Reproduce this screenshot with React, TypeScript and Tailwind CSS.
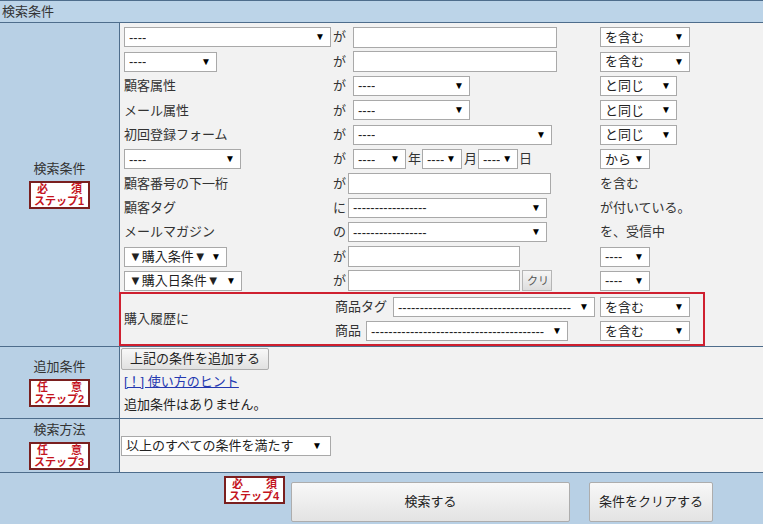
import React from "react";

const FONT = "font-['Liberation_Sans','Noto_Sans_CJK_JP',sans-serif]";

function Sel({ w, text, className = "" }: { w: number; text: string; className?: string }) {
  return (
    <div
      className={`flex h-[20px] shrink-0 items-center justify-between border border-[#a9a9a9] bg-white pl-[4px] pr-[5px] text-[13px] leading-none text-[#222] ${className}`}
      style={{ width: w }}
    >
      <span className="whitespace-nowrap overflow-hidden">{text}</span>
      <span className="text-[10px] text-black">▼</span>
    </div>
  );
}

function Inp({ w, className = "" }: { w: number; className?: string }) {
  return (
    <div
      className={`h-[21px] shrink-0 border border-[#a9a9a9] bg-white ${className}`}
      style={{ width: w }}
    />
  );
}

function Badge({ top, bottom }: { top: [string, string]; bottom: string }) {
  return (
    <div className="flex h-[28px] w-[61px] flex-col justify-center border-2 border-[#7a1f1f] bg-white text-[11px] font-bold leading-[12px] text-[#c4141e]">
      <div className="flex justify-between px-[6px]">
        <span>{top[0]}</span>
        <span>{top[1]}</span>
      </div>
      <div className="whitespace-nowrap pl-[3px]">{bottom}</div>
    </div>
  );
}

function Row({ children }: { children: React.ReactNode }) {
  return <div className="flex h-[24.4px] items-center">{children}</div>;
}

function Col1({ children }: { children: React.ReactNode }) {
  return <div className="flex w-[209px] shrink-0 items-center">{children}</div>;
}

function Col2({ children }: { children: React.ReactNode }) {
  return <div className="flex w-[267px] shrink-0 items-center">{children}</div>;
}

function LeftCell({ label, badge }: { label: string; badge: React.ReactNode }) {
  return (
    <div className="flex w-[120px] shrink-0 flex-col items-center justify-center gap-[4px] border-r border-[#4e6d8c] bg-[#b8d0e5]">
      <div className="leading-[16px] text-[#333]">{label}</div>
      {badge}
    </div>
  );
}

export default function App() {
  const ga = <span className="w-[13px] shrink-0">が</span>;
  const longDash = "----------------------------------------";
  return (
    <div className={`${FONT} h-[524px] w-[763px] overflow-hidden bg-[#f2f2f2] text-[13px] text-[#333]`}>
      {/* header */}
      <div className="flex h-[23px] items-center border-t border-b border-[#4e6d8c] bg-[#bcd4e8] pl-[2px] leading-none">
        検索条件
      </div>

      {/* section 1 */}
      <div className="flex h-[324px] border-b border-[#4e6d8c]">
        <LeftCell label="検索条件" badge={<Badge top={["必", "須"]} bottom="ステップ1" />} />
        <div className="flex flex-col pl-[4px] pt-[2px]">
          <Row>
            <Col1><Sel w={207} text="----" /></Col1>
            <Col2>{ga}<Inp w={204} className="ml-[7px]" /></Col2>
            <Sel w={90} text="を含む" />
          </Row>
          <Row>
            <Col1><Sel w={93} text="----" /></Col1>
            <Col2>{ga}<Inp w={204} className="ml-[7px]" /></Col2>
            <Sel w={90} text="を含む" />
          </Row>
          <Row>
            <Col1>顧客属性</Col1>
            <Col2>{ga}<Sel w={117} text="----" className="ml-[7px]" /></Col2>
            <Sel w={77} text="と同じ" />
          </Row>
          <Row>
            <Col1>メール属性</Col1>
            <Col2>{ga}<Sel w={117} text="----" className="ml-[7px]" /></Col2>
            <Sel w={77} text="と同じ" />
          </Row>
          <Row>
            <Col1>初回登録フォーム</Col1>
            <Col2>{ga}<Sel w={199} text="----" className="ml-[7px]" /></Col2>
            <Sel w={77} text="と同じ" />
          </Row>
          <Row>
            <Col1><Sel w={117} text="----" /></Col1>
            <Col2>
              {ga}
              <Sel w={53} text="----" className="ml-[7px]" />
              <span className="ml-[2px]">年</span>
              <Sel w={40} text="----" className="ml-[1px] pr-[3px]" />
              <span className="ml-[2px]">月</span>
              <Sel w={40} text="----" className="ml-[1px] pr-[3px]" />
              <span className="ml-[1px]">日</span>
            </Col2>
            <Sel w={50} text="から" />
          </Row>
          <Row>
            <Col1>顧客番号の下一桁</Col1>
            <Col2>{ga}<Inp w={203} className="ml-[2px]" /></Col2>
            <span>を含む</span>
          </Row>
          <Row>
            <Col1>顧客タグ</Col1>
            <Col2><span className="w-[13px] shrink-0">に</span><Sel w={199} text="-----------------" className="ml-[2px]" /></Col2>
            <span>が付いている。</span>
          </Row>
          <Row>
            <Col1>メールマガジン</Col1>
            <Col2><span className="w-[13px] shrink-0">の</span><Sel w={199} text="-----------------" className="ml-[2px]" /></Col2>
            <span>を、受信中</span>
          </Row>
          <Row>
            <Col1><Sel w={103} text="▼購入条件▼" /></Col1>
            <Col2>{ga}<Inp w={172} className="ml-[2px]" /></Col2>
            <Sel w={50} text="----" />
          </Row>
          <Row>
            <Col1><Sel w={118} text="▼購入日条件▼" /></Col1>
            <Col2>
              {ga}
              <Inp w={172} className="ml-[2px]" />
              <div className="ml-[2px] flex h-[21px] w-[30px] items-center justify-end overflow-hidden border border-[#b5b5b5] bg-gradient-to-b from-[#f6f6f6] to-[#dedede] pr-[2px] text-[11px] text-[#555]">
                クリ
              </div>
            </Col2>
            <Sel w={50} text="----" />
          </Row>
          <div className="-ml-[5px] -mt-[1px] flex h-[54px] w-[586px] items-center border-2 border-[#cf2030]">
            <div className="w-[214px] shrink-0 pl-[3px]">購入履歴に</div>
            <div className="flex flex-col gap-[4px]">
              <div className="flex items-center">
                <span className="w-[58px] shrink-0">商品タグ</span>
                <Sel w={202} text={longDash} className="gap-[6px]" />
                <Sel w={90} text="を含む" className="ml-[5px]" />
              </div>
              <div className="flex items-center">
                <span className="w-[31px] shrink-0">商品</span>
                <Sel w={202} text={longDash} className="gap-[6px]" />
                <Sel w={90} text="を含む" className="ml-[32px]" />
              </div>
            </div>
          </div>
        </div>
      </div>

      {/* section 2 */}
      <div className="flex h-[72px] border-b border-[#4e6d8c]">
        <LeftCell label="追加条件" badge={<Badge top={["任", "意"]} bottom="ステップ2" />} />
        <div className="flex flex-col pl-[1px] pt-[1px]">
          <div className="flex h-[22px] w-[148px] items-center justify-center rounded-[2px] border border-[#adadad] bg-gradient-to-b from-[#f8f8f8] to-[#e1e1e1] text-[#222]">
            上記の条件を追加する
          </div>
          <div className="pl-[3px] leading-[23px]">
            <a href="#" className="text-[#2438b0] underline">[！] 使い方のヒント</a>
          </div>
          <div className="pl-[3px] leading-[23px] text-[#222]">追加条件はありません。</div>
        </div>
      </div>

      {/* section 3 */}
      <div className="flex h-[54px] border-b border-[#4e6d8c]">
        <LeftCell label="検索方法" badge={<Badge top={["任", "意"]} bottom="ステップ3" />} />
        <div className="flex items-center pl-[1px]">
          <Sel w={210} text="以上のすべての条件を満たす" className="pr-[8px]" />
        </div>
      </div>

      {/* section 4 */}
      <div className="flex h-[52px] border-b border-[#4e6d8c] bg-[#b8d0e5] pl-[224px] pt-[3px]">
        <Badge top={["必", "須"]} bottom="ステップ4" />
        <div className="ml-[6px] mt-[6px] flex h-[40px] w-[279px] items-center justify-center rounded-[2px] border border-[#adadad] bg-gradient-to-b from-[#f8f8f8] to-[#e3e3e3] text-[#222]">
          検索する
        </div>
        <div className="ml-[19px] mt-[6px] flex h-[40px] w-[124px] items-center justify-center rounded-[2px] border border-[#adadad] bg-gradient-to-b from-[#f8f8f8] to-[#e3e3e3] text-[#222]">
          条件をクリアする
        </div>
      </div>
    </div>
  );
}
